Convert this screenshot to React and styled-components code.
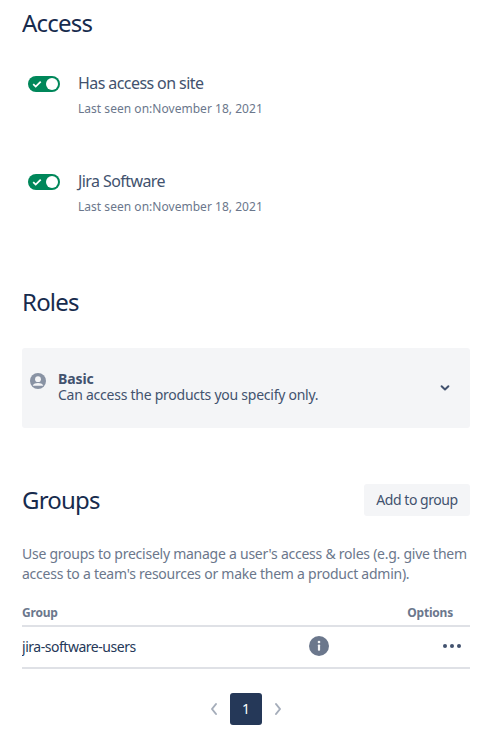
import React from "react";
import styled, { createGlobalStyle } from "styled-components";

const Global = createGlobalStyle`
  html, body { margin: 0; padding: 0; background: #fff; }
  body { font-family: "Noto Sans", sans-serif; color: #172B4D; font-size: 14px; line-height: 20px; }
`;
const Page = styled.div`
  width: 448px; height: 750px; margin-left: 22px; overflow: hidden;
  display: flex; flex-direction: column;
`;
const Heading = styled.h2`
  margin: 0; font-size: 24px; line-height: 28px; font-weight: 400; color: #172B4D; letter-spacing: -0.8px;
`;
const AccessHeading = styled(Heading)`margin-top: 9px;`;
const AccessList = styled.div`
  display: flex; flex-direction: column; gap: 52px; margin-top: 34px; padding-left: 6px;
`;
const AccessRow = styled.div`display: flex; gap: 18px; align-items: flex-start;`;
const Toggle = styled.div`
  width: 32px; height: 16px; margin-top: 5px; border-radius: 8px; background: #00875A; position: relative; flex: none;
  display: flex; align-items: center;
`;
const Knob = styled.span`
  position: absolute; right: 2px; top: 2px; width: 12px; height: 12px; border-radius: 50%; background: #fff;
`;
const AccessText = styled.div`display: flex; flex-direction: column;`;
const AccessTitle = styled.div`font-size: 16px; line-height: 24px; color: #42526E; letter-spacing: -0.58px;`;
const Seen = styled.div`font-size: 12px; line-height: 16px; margin-top: 6px; color: #6B778C; letter-spacing: 0.03px;`;
const RolesHeading = styled(Heading)`margin-top: 73px;`;
const RolePanel = styled.div`
  margin-top: 32px; height: 80px; border-radius: 3px; background: #F4F5F7; display: flex; align-items: center;
  padding: 0 13px 0 8px; box-sizing: border-box;
`;
const PersonSlot = styled.div`display: flex; margin-top: -14px;`;
const RoleText = styled.div`flex: 1; margin-left: 12px; color: #42526E; line-height: 16px; margin-top: -3px; letter-spacing: -0.25px;`;
const RoleName = styled.div`font-weight: 700; font-size: 14px; line-height: 16px; letter-spacing: -0.1px;`;
const GroupsHead = styled.div`
  margin-top: 56px; height: 32px; display: flex; justify-content: space-between; align-items: center;
`;
const AddButton = styled.button`
  height: 32px; width: 106px; border: 0; padding: 0; border-radius: 3px; background: #F4F5F7; color: #42526E;
  font: 400 14px/20px "Noto Sans", sans-serif; letter-spacing: -0.45px;
`;
const Description = styled.p`margin: 28px 0 0; color: #6B778C; font-size: 14px; line-height: 20px; white-space: nowrap; letter-spacing: -0.25px;`;
const TableHeader = styled.div`
  margin-top: 21px; height: 20px; display: flex; justify-content: space-between; align-items: flex-start;
  font-size: 12px; font-weight: 700; color: #6B778C; line-height: 16px; padding-right: 17px;
  border-bottom: 2px solid #DFE1E6; letter-spacing: -0.2px;
`;
const TableRow = styled.div`
  height: 40px; display: flex; align-items: center; color: #172B4D; font-size: 14px;
  border-bottom: 2px solid #DFE1E6;
`;
const GroupName = styled.div`flex: 1; color: #253858; letter-spacing: -0.47px;`;
const InfoSlot = styled.div`display: flex; margin-right: 113px; margin-top: -2px;`;
const MoreSlot = styled.div`display: flex; margin-right: 8px; margin-top: -2px;`;
const Pagination = styled.nav`
  margin-top: 24px; display: flex; justify-content: center; align-items: center; gap: 4px;
`;
const PageArrow = styled.span`display: flex; width: 24px; justify-content: center; color: #A5ADBA;`;
const PageCurrent = styled.span`
  width: 32px; height: 32px; border-radius: 3px; background: #253858; color: #fff;
  display: flex; align-items: center; justify-content: center; font-size: 14px;
`;

const Check = () => (
  <svg width="12" height="12" viewBox="0 0 12 12" style={{ marginLeft: 3 }}>
    <path d="M2.2 6.2l2.5 2.4 5-5" fill="none" stroke="#fff" strokeWidth="1.8" />
  </svg>
);
const Person = () => (
  <svg width="16" height="16" viewBox="0 0 16 16">
    <circle cx="8" cy="8" r="8" fill="#8993A4" />
    <circle cx="8" cy="6.2" r="2.9" fill="#F4F5F7" />
    <path d="M2.9 12.2c.8-1.5 2.6-2.3 5.1-2.3s4.3.8 5.1 2.3v.6H2.9z" fill="#F4F5F7" />
  </svg>
);
const Chevron = () => (
  <svg width="24" height="24" viewBox="0 0 24 24">
    <path d="M8.6 10.3L12 13.5l3.4-3.2" fill="none" stroke="#42526E" strokeWidth="2" strokeLinecap="round" strokeLinejoin="round" />
  </svg>
);
const Info = () => (
  <svg width="20" height="20" viewBox="0 0 20 20">
    <circle cx="10" cy="10" r="10" fill="#6B778C" />
    <circle cx="10" cy="6" r="1.3" fill="#F4F5F7" />
    <rect x="8.9" y="8.4" width="2.2" height="6.4" rx="0.8" fill="#F4F5F7" />
  </svg>
);
const More = () => (
  <svg width="20" height="6" viewBox="0 0 20 6">
    <circle cx="3" cy="3" r="2" fill="#42526E" />
    <circle cx="10" cy="3" r="2" fill="#42526E" />
    <circle cx="17" cy="3" r="2" fill="#42526E" />
  </svg>
);
const Arrow = ({ d }) => (
  <svg width="10" height="14" viewBox="0 0 10 14">
    <path d={d} fill="none" stroke="#A5ADBA" strokeWidth="2" strokeLinecap="round" strokeLinejoin="round" />
  </svg>
);

const Access = ({ title }) => (
  <AccessRow>
    <Toggle><Check /><Knob /></Toggle>
    <AccessText>
      <AccessTitle>{title}</AccessTitle>
      <Seen>Last seen on:November 18, 2021</Seen>
    </AccessText>
  </AccessRow>
);

export default function App() {
  return (
    <Page>
      <Global />
      <AccessHeading>Access</AccessHeading>
      <AccessList>
        <Access title="Has access on site" />
        <Access title="Jira Software" />
      </AccessList>
      <RolesHeading>Roles</RolesHeading>
      <RolePanel>
        <PersonSlot><Person /></PersonSlot>
        <RoleText>
          <RoleName>Basic</RoleName>
          Can access the products you specify only.
        </RoleText>
        <Chevron />
      </RolePanel>
      <GroupsHead>
        <Heading>Groups</Heading>
        <AddButton>Add to group</AddButton>
      </GroupsHead>
      <Description>
        Use groups to precisely manage a user's access &amp; roles (e.g. give them<br />
        access to a team's resources or make them a product admin).
      </Description>
      <TableHeader><span>Group</span><span>Options</span></TableHeader>
      <TableRow>
        <GroupName>jira-software-users</GroupName>
        <InfoSlot><Info /></InfoSlot>
        <MoreSlot><More /></MoreSlot>
      </TableRow>
      <Pagination>
        <PageArrow><Arrow d="M7 2L3 7l4 5" /></PageArrow>
        <PageCurrent>1</PageCurrent>
        <PageArrow><Arrow d="M3 2l4 5-4 5" /></PageArrow>
      </Pagination>
    </Page>
  );
}
